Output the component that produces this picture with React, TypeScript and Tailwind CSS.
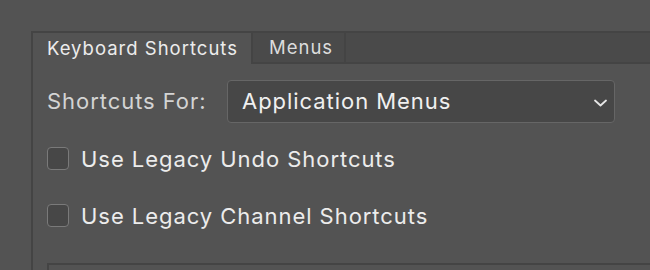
const Checkbox = ({ label }: { label: string }) => (
    <label className="flex items-center gap-[12px] h-[23px]">
        <span className="w-[22px] h-[23px] rounded-[4px] border-[1.5px] border-[#7a7a7a] bg-[#474747]" />
        <span className="text-[22px] tracking-[0.95px] text-[#ececec] leading-none pt-[1px]">{label}</span>
    </label>
);

export default function App() {
    return (
        <div className="w-[650px] h-[270px] overflow-hidden bg-[#535353] pt-[31px] pl-[31px] font-['Inter',sans-serif]">
            <div className="border-l-2 border-t-2 border-[#444444] h-full">
                {/* tabs */}
                <div className="flex h-[31px]">
                    <div className="w-[218px] flex items-center pl-[14px] text-[18.5px] tracking-[1px] text-[#ececec]">
                        Keyboard Shortcuts
                    </div>
                    <div className="w-[95px] flex items-center pl-[16px] text-[18.5px] tracking-[1px] text-[#dcdcdc] bg-[#4a4a4a] border-l-2 border-r-2 border-b-2 border-[#444444]">
                        Menus
                    </div>
                    <div className="flex-1 bg-[#4a4a4a] border-b-2 border-[#444444]" />
                </div>
                {/* content */}
                <div className="pl-[14px] pt-[16px]">
                    <div className="flex items-center gap-[20px]">
                        <span className="w-[160px] text-[22px] tracking-[0.95px] text-[#d4d4d4] whitespace-nowrap">Shortcuts For:</span>
                        <div className="w-[388px] h-[43px] rounded-[4px] border-[1.5px] border-[#666666] bg-[#474747] flex items-center justify-between pl-[14px] pr-[7px]">
                            <span className="text-[22px] tracking-[0.95px] text-[#f0f0f0]">Application Menus</span>
                            <svg width="13" height="8" viewBox="0 0 13 8" fill="none" className="mt-[2px]">
                                <polyline points="1,1.5 6.5,6.5 12,1.5" stroke="#e6e6e6" strokeWidth="1.8" strokeLinecap="round" strokeLinejoin="round" />
                            </svg>
                        </div>
                    </div>
                    <div className="mt-[24px] flex flex-col gap-[34px]">
                        <Checkbox label="Use Legacy Undo Shortcuts" />
                        <Checkbox label="Use Legacy Channel Shortcuts" />
                    </div>
                    <div className="mt-[36px] h-[40px] border-l-2 border-t-2 border-[#444444]" />
                </div>
            </div>
        </div>
    );
}
